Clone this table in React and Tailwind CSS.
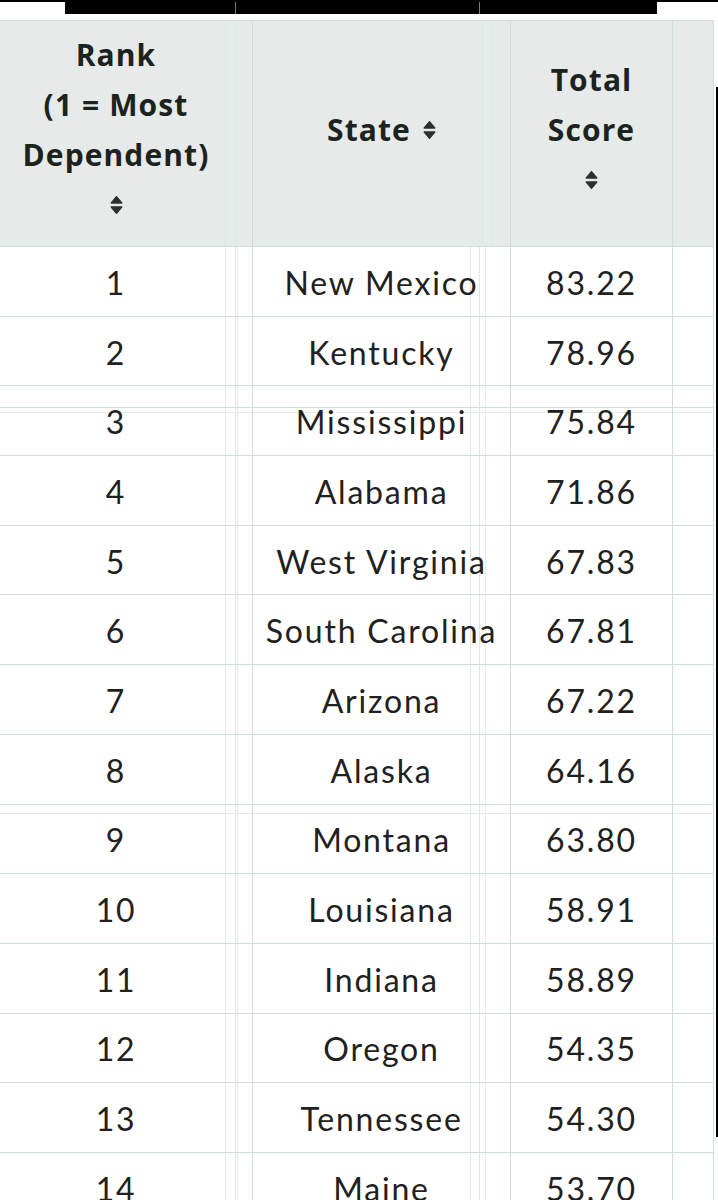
import React from 'react';

const rows = [
  [1, 'New Mexico', '83.22'],
  [2, 'Kentucky', '78.96'],
  [3, 'Mississippi', '75.84'],
  [4, 'Alabama', '71.86'],
  [5, 'West Virginia', '67.83'],
  [6, 'South Carolina', '67.81'],
  [7, 'Arizona', '67.22'],
  [8, 'Alaska', '64.16'],
  [9, 'Montana', '63.80'],
  [10, 'Louisiana', '58.91'],
  [11, 'Indiana', '58.89'],
  [12, 'Oregon', '54.35'],
  [13, 'Tennessee', '54.30'],
  [14, 'Maine', '53.70'],
];

// faint seams that run down the whole table
const seams =
  'bg-[image:linear-gradient(90deg,transparent_225px,#dde8e1_225px_226px,transparent_226px_235px,#dde8e1_235px_236px,transparent_236px_237px,#e3ece6_237px_238px,transparent_238px_470px,#dde8e1_470px_471px,transparent_471px_479px,#dde8e1_479px_480px,transparent_480px_485px,#e6eee9_485px_486px,transparent_486px)]';

const SortIcon = () => (
  <svg width="13" height="20" viewBox="0 0 13 20" className="inline-block">
    <path d="M1.2 8 L6.5 1.6 L11.8 8 Z" fill="#2b312d" stroke="#2b312d" strokeWidth="1.3" strokeLinejoin="round" />
    <path d="M1.2 12 L11.8 12 L6.5 18.4 Z" fill="#2b312d" stroke="#2b312d" strokeWidth="1.3" strokeLinejoin="round" />
  </svg>
);

const rowExtra = {
  3: 'bg-[image:linear-gradient(180deg,transparent_21px,#d3e0d8_21px_22px,transparent_22px_26px,#e4ece7_26px_27px,transparent_27px)]',
  9: 'bg-[image:linear-gradient(180deg,transparent_8px,#e2ebe5_8px_9px,transparent_9px)]',
};

export default function App() {
  return (
    <div className="w-[718px] h-[1200px] overflow-hidden bg-white font-['Lato','Open_Sans',sans-serif] text-[#1f2120]">
      {/* cropped top strip */}
      <div className="h-[2px] bg-black" />
      <div className="flex h-[12px]">
        <div className="w-[65px] bg-white" />
        <div className="flex flex-1 bg-black">
          <div className="w-[170px]" />
          <div className="w-px bg-[#7a7a7a]" />
          <div className="w-[243px]" />
          <div className="w-px bg-[#7a7a7a]" />
        </div>
        <div className="w-[61px] bg-white" />
      </div>
      <div className="h-[6px]" />

      <div className="flex">
        <div className={`w-[714px] border-t border-[#cfdfd5] ${seams}`}>
          {/* header */}
          <div className="flex h-[226px] border-b border-[#cfdfd5] bg-[#e6eae8] font-['Open_Sans','Lato',sans-serif] text-[30px] font-bold leading-[50px] text-[#1c231f] tracking-[1.1px]">
            <div className={`w-[253px] border-r border-[#cfdfd5] flex flex-col items-center justify-center pr-[20px] pb-[7px] text-center ${seams}`}>
              <span>Rank</span>
              <span>(1 = Most</span>
              <span>Dependent)</span>
              <span className="h-[50px] flex items-center"><SortIcon /></span>
            </div>
            <div className={`w-[258px] border-r border-[#cfdfd5] flex items-center justify-center pb-[7px] ${seams} bg-[position:-253px_0]`}>
              <span>State</span>
              <span className="ml-[12px] flex items-center"><SortIcon /></span>
            </div>
            <div className="w-[162px] border-r border-[#cfdfd5] flex flex-col items-center justify-center pb-[7px] text-center">
              <span>Total</span>
              <span>Score</span>
              <span className="h-[50px] flex items-center"><SortIcon /></span>
            </div>
            <div className="w-[41px] border-r border-[#cfdfd5]" />
          </div>

          {/* body */}
          {rows.map(([rank, state, score]) => (
            <div
              key={rank}
              className={`flex h-[69.7px] border-b border-[#cfdfd5] text-[32px] tracking-[1.8px] ${rowExtra[rank] || ''}`}
            >
              <div className="w-[253px] border-r border-[#cfdfd5] flex items-center justify-center pr-[20px] pt-[3px]">
                {rank}
              </div>
              <div className="w-[258px] border-r border-[#cfdfd5] flex items-center justify-center pt-[3px] whitespace-nowrap">
                {state}
              </div>
              <div className="w-[162px] border-r border-[#cfdfd5] flex items-center justify-center pt-[3px]">
                {score}
              </div>
              <div className="w-[41px] border-r border-[#cfdfd5]" />
            </div>
          ))}
        </div>
        <div className="w-[2px]" />
        <div className="w-[2px]">
          <div className="mt-[67px] h-[1050px] bg-black" />
        </div>
      </div>
    </div>
  );
}
